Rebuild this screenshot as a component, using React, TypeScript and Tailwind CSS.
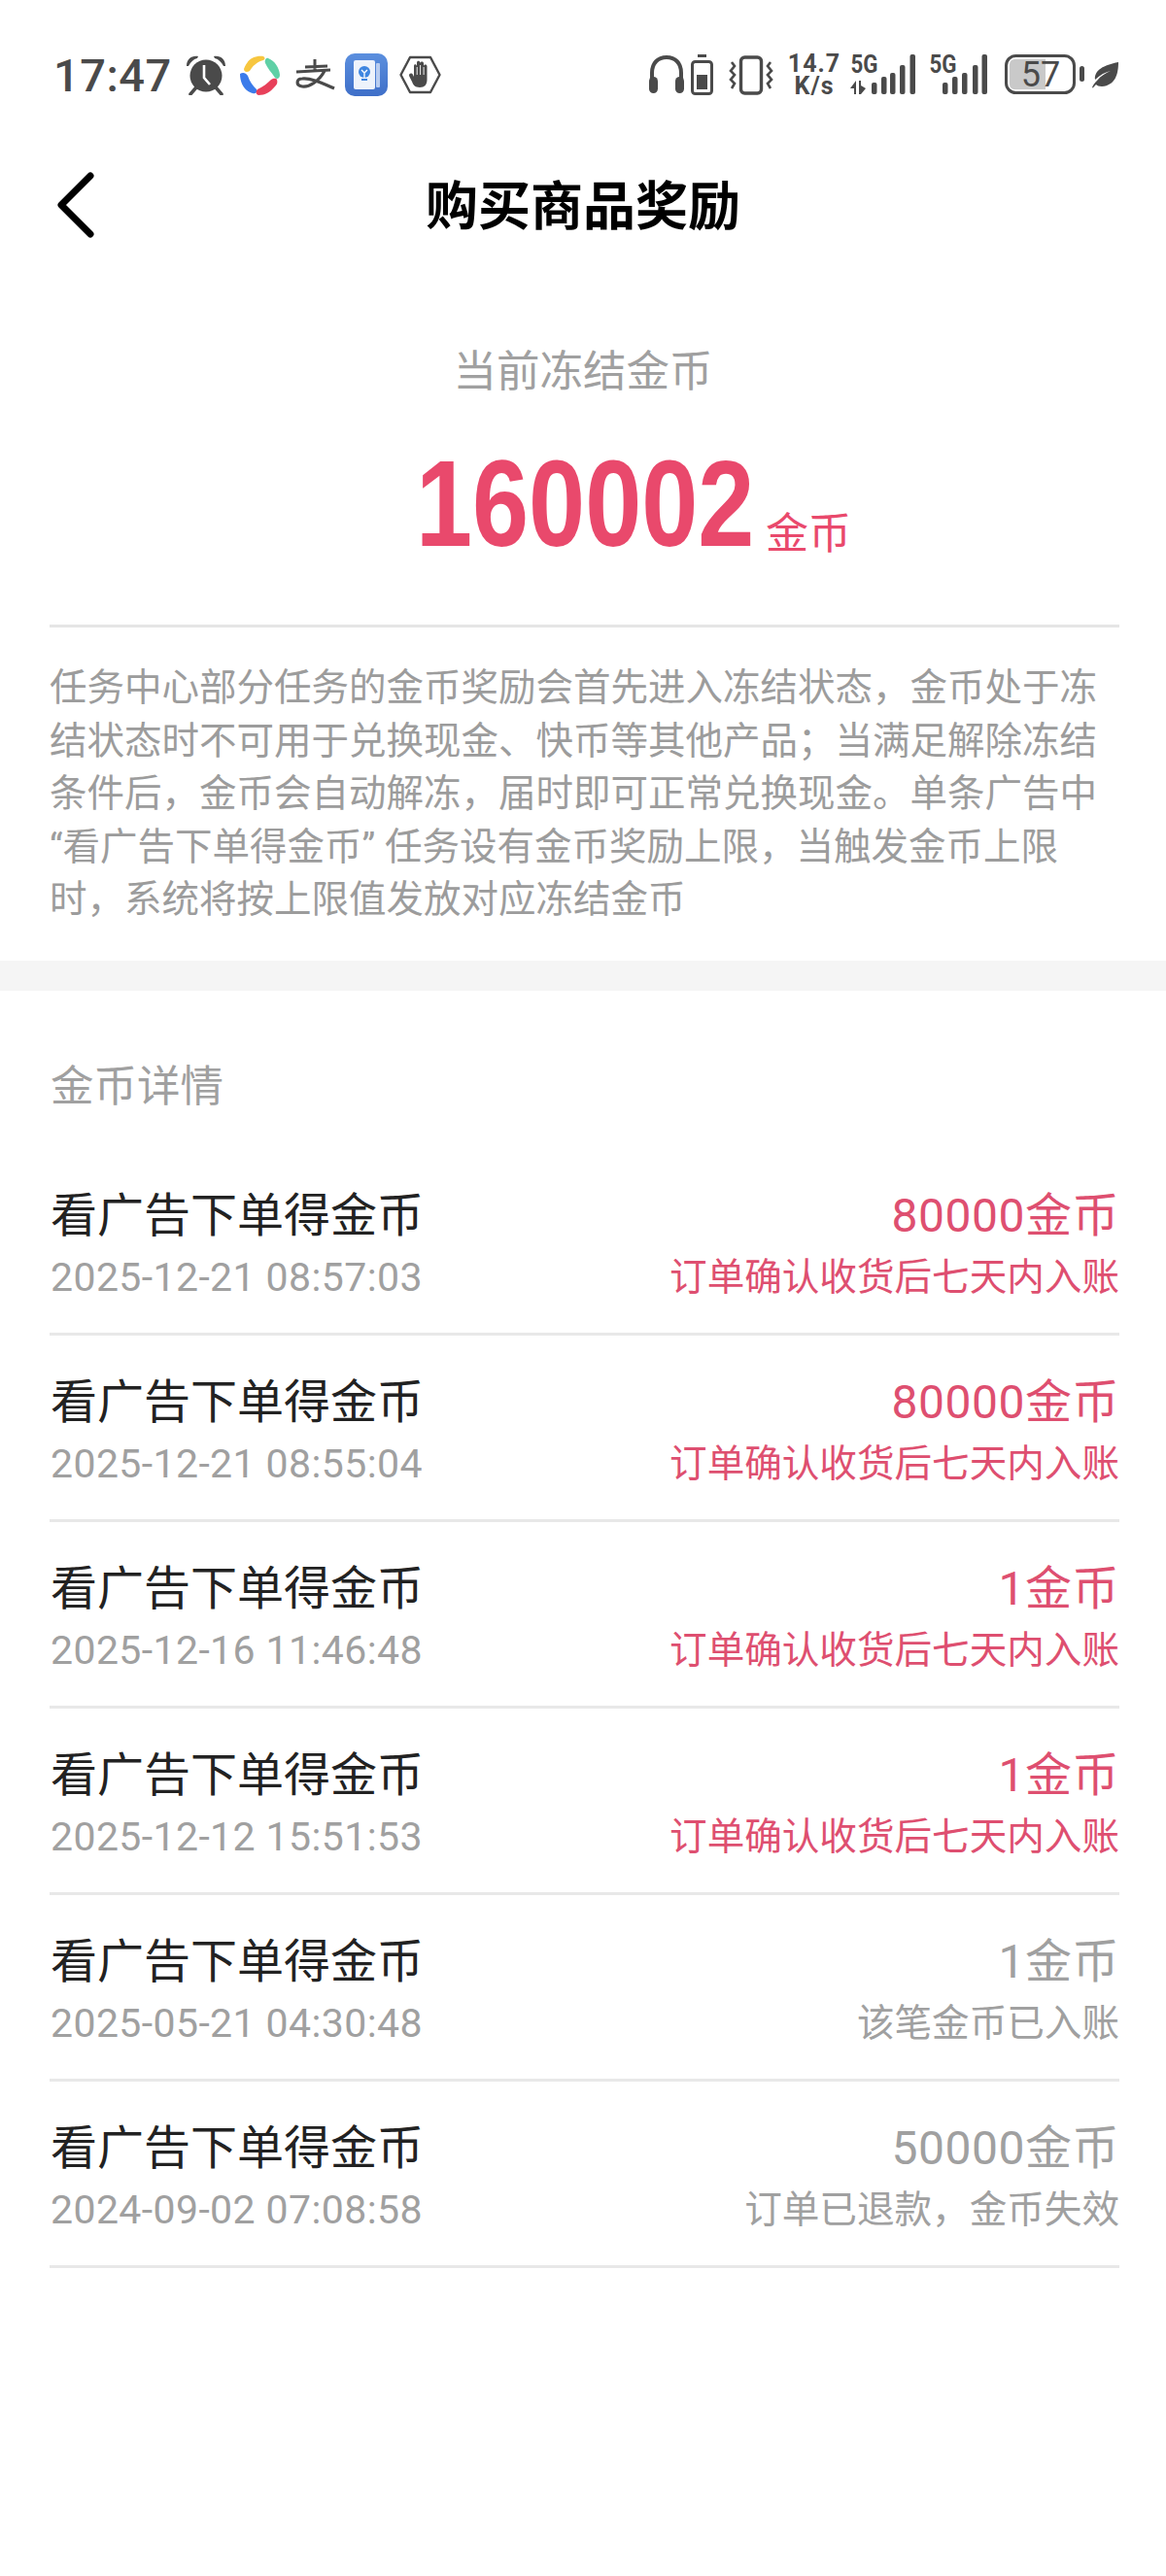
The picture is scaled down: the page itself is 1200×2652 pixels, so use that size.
const sans = "font-['Roboto','Noto_Sans_CJK_SC',sans-serif]"

const records = [
  { time: "2025-12-21 08:57:03", amount: "80000金币", note: "订单确认收货后七天内入账", active: true },
  { time: "2025-12-21 08:55:04", amount: "80000金币", note: "订单确认收货后七天内入账", active: true },
  { time: "2025-12-16 11:46:48", amount: "1金币", note: "订单确认收货后七天内入账", active: true },
  { time: "2025-12-12 15:51:53", amount: "1金币", note: "订单确认收货后七天内入账", active: true },
  { time: "2025-05-21 04:30:48", amount: "1金币", note: "该笔金币已入账", active: false },
  { time: "2024-09-02 07:08:58", amount: "50000金币", note: "订单已退款，金币失效", active: false },
]

function AlarmIcon() {
  return (
    <svg width="42" height="42" viewBox="0 0 42 42" fill="none">
      <circle cx="21" cy="22" r="16.5" fill="#4a4a4a" />
      <path d="M1 12 C1 5 6 1 13 2 L12 4 C8 5 5 8 3 12 Z M41 12 C41 5 36 1 29 2 L30 4 C34 5 37 8 39 12 Z" fill="#4a4a4a" />
      <path d="M11 34 L5 41 M31 34 L37 41" stroke="#4a4a4a" strokeWidth="3.5" strokeLinecap="round" />
      <path d="M19 11 V24 L25 31" stroke="#fff" strokeWidth="2.6" fill="none" />
    </svg>
  )
}

function PetalsIcon() {
  return (
    <svg width="43" height="43" viewBox="0 0 43 43">
      <path d="M5 15 C8 6 15 1 25 2 C27 3 27 5 25 6 C18 8 14 12 11 17 C8 19 5 18 5 15 Z" fill="#f7c63f" />
      <path d="M30 4 C37 7 41 13 42 21 C42 25 39 26 37 24 C33 18 29 14 27 9 C26 6 28 3 30 4 Z" fill="#5fd0a6" />
      <path d="M1 20 C4 18 7 19 9 22 C11 28 14 32 18 36 C19 39 17 41 14 40 C6 38 1 30 1 20 Z" fill="#3b7bea" />
      <path d="M39 26 C40 29 39 31 37 33 C32 39 27 42 20 42 C17 41 17 38 19 36 C25 33 29 30 33 26 C35 25 38 24 39 26 Z" fill="#e8405a" />
    </svg>
  )
}

// alipay mark, drawn as a logo
function AlipayIcon() {
  return (
    <svg width="41" height="34" viewBox="0 0 41 34" fill="none">
      <path d="M10 9 L33 8 M20 1 V13 M1 14 L36 12" stroke="#4a4a4a" strokeWidth="3" />
      <path d="M30 13 C24 24 14 30 7 29 C0 28 1 21 7 21 C15 20 26 25 40 31" stroke="#4a4a4a" strokeWidth="3.2" />
    </svg>
  )
}

function NoteAppIcon() {
  return (
    <div className="flex h-[44px] w-[44px] items-center justify-center rounded-[10px] bg-gradient-to-b from-[#5b8fde] to-[#3f6fc8]">
      <svg width="34" height="34" viewBox="0 0 34 34">
        <rect x="27" y="5" width="4" height="25" rx="1" fill="#b9cdf0" />
        <rect x="4" y="2" width="22" height="30" rx="2" fill="#eef3fb" />
        <circle cx="15" cy="14" r="6" fill="#3f86e0" />
        <path d="M12 12 L15 15 L18 12 M15 15 V20" stroke="#fff" strokeWidth="1.3" fill="none" />
        <rect x="12" y="21" width="6" height="2" fill="#3f86e0" />
      </svg>
    </div>
  )
}

function HandIcon() {
  return (
    <svg width="43" height="40" viewBox="0 0 43 40" fill="none">
      <path d="M11 2 H32 L41.5 20 L32 38 H11 L1.5 20 Z" stroke="#4a4a4a" strokeWidth="2.4" strokeLinejoin="round" />
      <path d="M10 21 C10 18 13 18 14 20 L15 22 V11 C15 8.5 17.5 8.5 18 11 V7.5 C18 5 21 5 21.5 7.5 V8 C22 6 25 6 25 8.5 V11 C25.5 9 28.5 9 28.5 11.5 V25 C28.5 30 26 33 21 33 C16 33 14 30 13 27 Z" fill="#4a4a4a" />
      <path d="M18.2 12 V20 M21.6 10 V20 M25.1 12 V20" stroke="#fff" strokeWidth="0.9" />
    </svg>
  )
}

function HeadphonesIcon() {
  return (
    <svg width="36" height="40" viewBox="0 0 36 40" fill="none">
      <path d="M3 26 V18 C3 8 9 2 18 2 C27 2 33 8 33 18 V26" stroke="#4a4a4a" strokeWidth="4" />
      <rect x="0" y="22" width="9" height="17" rx="4.5" fill="#4a4a4a" />
      <rect x="27" y="22" width="9" height="17" rx="4.5" fill="#4a4a4a" />
    </svg>
  )
}

function SmallBatteryIcon() {
  return (
    <svg width="23" height="42" viewBox="0 0 23 42" fill="none">
      <rect x="7" y="0" width="9" height="3" fill="#4a4a4a" />
      <rect x="1.5" y="7.5" width="20" height="33" rx="3" stroke="#4a4a4a" strokeWidth="3" />
      <rect x="6" y="21" width="11" height="15" fill="#4a4a4a" />
    </svg>
  )
}

function VibrateIcon() {
  return (
    <svg width="46" height="41" viewBox="0 0 46 41" fill="none">
      <rect x="12.5" y="2" width="21" height="37" rx="4" stroke="#4a4a4a" strokeWidth="3.4" />
      <path d="M3 7 L6 11 L2 16 L6 20 L2 25 L6 29 L3 34" stroke="#4a4a4a" strokeWidth="2.6" />
      <path d="M43 7 L40 11 L44 16 L40 20 L44 25 L40 29 L43 34" stroke="#4a4a4a" strokeWidth="2.6" />
    </svg>
  )
}

function Signal5G({ arrows }: { arrows: boolean }) {
  return (
    <svg className="-mt-[8px]" width={arrows ? 68 : 61} height="50" viewBox={arrows ? "0 -8 68 50" : "0 -8 61 50"}>
      <text x="0.5" y="19" fontSize="25" fontWeight="700" fill="#4a4a4a" fontFamily="Roboto" textLength="28" lengthAdjust="spacingAndGlyphs">
        5G
      </text>
      {arrows ? (
        <g fill="#4a4a4a">
          <path d="M0 35 L6 27 V41 H4 V35 Z" />
          <path d="M9 27 H11 V32 L16 35 L11 41 H9 Z" />
          <rect x="22" y="29" width="5.5" height="12" rx="2" />
          <rect x="32" y="23" width="5.5" height="18" rx="2" />
          <rect x="41" y="19" width="5.5" height="22" rx="2" />
          <rect x="51" y="11" width="5.5" height="30" rx="2" />
          <rect x="61.5" y="0" width="5.5" height="41" rx="2" />
        </g>
      ) : (
        <g fill="#4a4a4a">
          <rect x="14" y="29" width="5.5" height="12" rx="2" />
          <rect x="24" y="23" width="5.5" height="18" rx="2" />
          <rect x="34" y="19" width="5.5" height="22" rx="2" />
          <rect x="45" y="11" width="5.5" height="30" rx="2" />
          <rect x="54.5" y="0" width="5.5" height="41" rx="2" />
        </g>
      )}
    </svg>
  )
}

function MainBattery() {
  return (
    <svg width="82" height="42" viewBox="0 0 82 42">
      <rect x="1.5" y="1.5" width="70" height="38" rx="10" fill="#fff" stroke="#4a4a4a" strokeWidth="3" />
      <path d="M5 11 C5 7 7 5 11 5 H42 V36 H11 C7 36 5 34 5 30 Z" fill="#c9c9c9" />
      <rect x="77" y="12" width="5" height="16" rx="2.5" fill="#4a4a4a" />
      <text x="37" y="33" fontSize="36" textAnchor="middle" fill="#4a4a4a" fontFamily="Roboto">
        57
      </text>
    </svg>
  )
}

function LeafIcon() {
  return (
    <svg width="27" height="27" viewBox="0 0 27 27">
      <path d="M27 0 C27 12 24 24 10 25 C7 25 5 24 4 23 C1 26 1 27 0 26 C1 23 3 21 5 19 C9 14 14 11 19 9 C14 10 8 13 3 18 C2 8 12 3 27 0 Z" fill="#4a4a4a" />
    </svg>
  )
}

function StatusBar() {
  return (
    <div className="flex h-[44px] items-center justify-between pl-[55px] pr-[49px] text-[#4a4a4a]">
      <div className="flex items-center">
        <span className="w-[119px] font-['Roboto',sans-serif] text-[47px] leading-none font-medium tracking-[0.5px]">17:47</span>
        <div className="ml-[17px]">
          <AlarmIcon />
        </div>
        <div className="ml-[13px]">
          <PetalsIcon />
        </div>
        <div className="ml-[15px]">
          <AlipayIcon />
        </div>
        <div className="ml-[10px]">
          <NoteAppIcon />
        </div>
        <div className="ml-[12px]">
          <HandIcon />
        </div>
      </div>
      <div className="flex items-center">
        <HeadphonesIcon />
        <div className="ml-[7px]">
          <SmallBatteryIcon />
        </div>
        <div className="ml-[16px]">
          <VibrateIcon />
        </div>
        <div className="ml-[16px] flex w-[52px] flex-col items-center font-['Roboto',sans-serif] text-[25px] leading-[23px] font-bold tracking-[1px]">
          <span>14.7</span>
          <span>K/s</span>
        </div>
        <div className="ml-[11px]">
          <Signal5G arrows />
        </div>
        <div className="ml-[13px]">
          <Signal5G arrows={false} />
        </div>
        <div className="ml-[17px]">
          <MainBattery />
        </div>
        <div className="ml-[8px]">
          <LeafIcon />
        </div>
      </div>
    </div>
  )
}

function RecordRow({ time, amount, note, active }: (typeof records)[number]) {
  return (
    <div className="flex h-[192px] items-start justify-between border-b-[3px] border-[#e8e8e8] pt-[41px]">
      <div>
        <div className="ml-[1px] text-[48px] leading-[56px] text-[#222222]">看广告下单得金币</div>
        <div className="ml-[1px] mt-[10px] text-[41px] leading-[50px] tracking-[0.4px] text-[#a0a0a0]">{time}</div>
      </div>
      <div className={`text-right ${active ? "text-[#de4f70]" : "text-[#a0a0a0]"}`}>
        <div className="text-[48px] leading-[56px] tracking-[0.5px]">{amount}</div>
        <div className="mt-[10px] text-[38.6px] leading-[50px]">{note}</div>
      </div>
    </div>
  )
}

export default function App() {
  return (
    <div className={`min-h-[2652px] w-[1200px] bg-white pt-[55px] ${sans}`}>
      <StatusBar />

      <div className="relative mt-[54px] flex h-[122px] items-center justify-center">
        <svg className="absolute left-[57px] top-[24px]" width="42" height="68" viewBox="0 0 42 68" fill="none">
          <path d="M36 4 L6 34 L36 64" stroke="#000" strokeWidth="7" strokeLinecap="round" strokeLinejoin="round" />
        </svg>
        <h1 className="text-[54px] leading-none font-bold text-black">购买商品奖励</h1>
      </div>

      <div className="mt-[78px] text-center text-[44.5px] leading-[60px] text-[#a0a0a0]">当前冻结金币</div>

      <div className="mt-[40px] flex h-[130px] items-end justify-center pl-[104px]">
        <span className="inline-block w-[342px] origin-left scale-x-[0.822] font-['Liberation_Sans',sans-serif] text-[127px] leading-[130px] font-bold whitespace-nowrap text-[#e9496c]">
          160002
        </span>
        <span className="mb-[8px] ml-[18px] text-[44px] leading-[50px] text-[#e9496c]">金币</span>
      </div>

      <div className="ml-[51px] mr-[48px] mt-[60px] h-[3px] bg-[#e5e5e5]" />

      <p className="ml-[51px] mr-[48px] mt-[35px] text-[38.5px] leading-[54.5px] text-[#9c9c9c]">
        任务中心部分任务的金币奖励会首先进入冻结状态，金币处于冻结状态时不可用于兑换现金、快币等其他产品；当满足解除冻结条件后，金币会自动解冻，届时即可正常兑换现金。单条广告中 “看广告下单得金币” 任务设有金币奖励上限，当触发金币上限时，系统将按上限值发放对应冻结金币
      </p>

      <div className="mt-[35px] h-[31px] bg-[#f5f5f5]" />

      <div className="mt-[69px] pl-[52px] text-[44.5px] leading-[60px] text-[#a0a0a0]">金币详情</div>

      <div className="mt-[34px] pl-[51px] pr-[48px]">
        {records.map((r) => (
          <RecordRow key={r.time} {...r} />
        ))}
      </div>
    </div>
  )
}
